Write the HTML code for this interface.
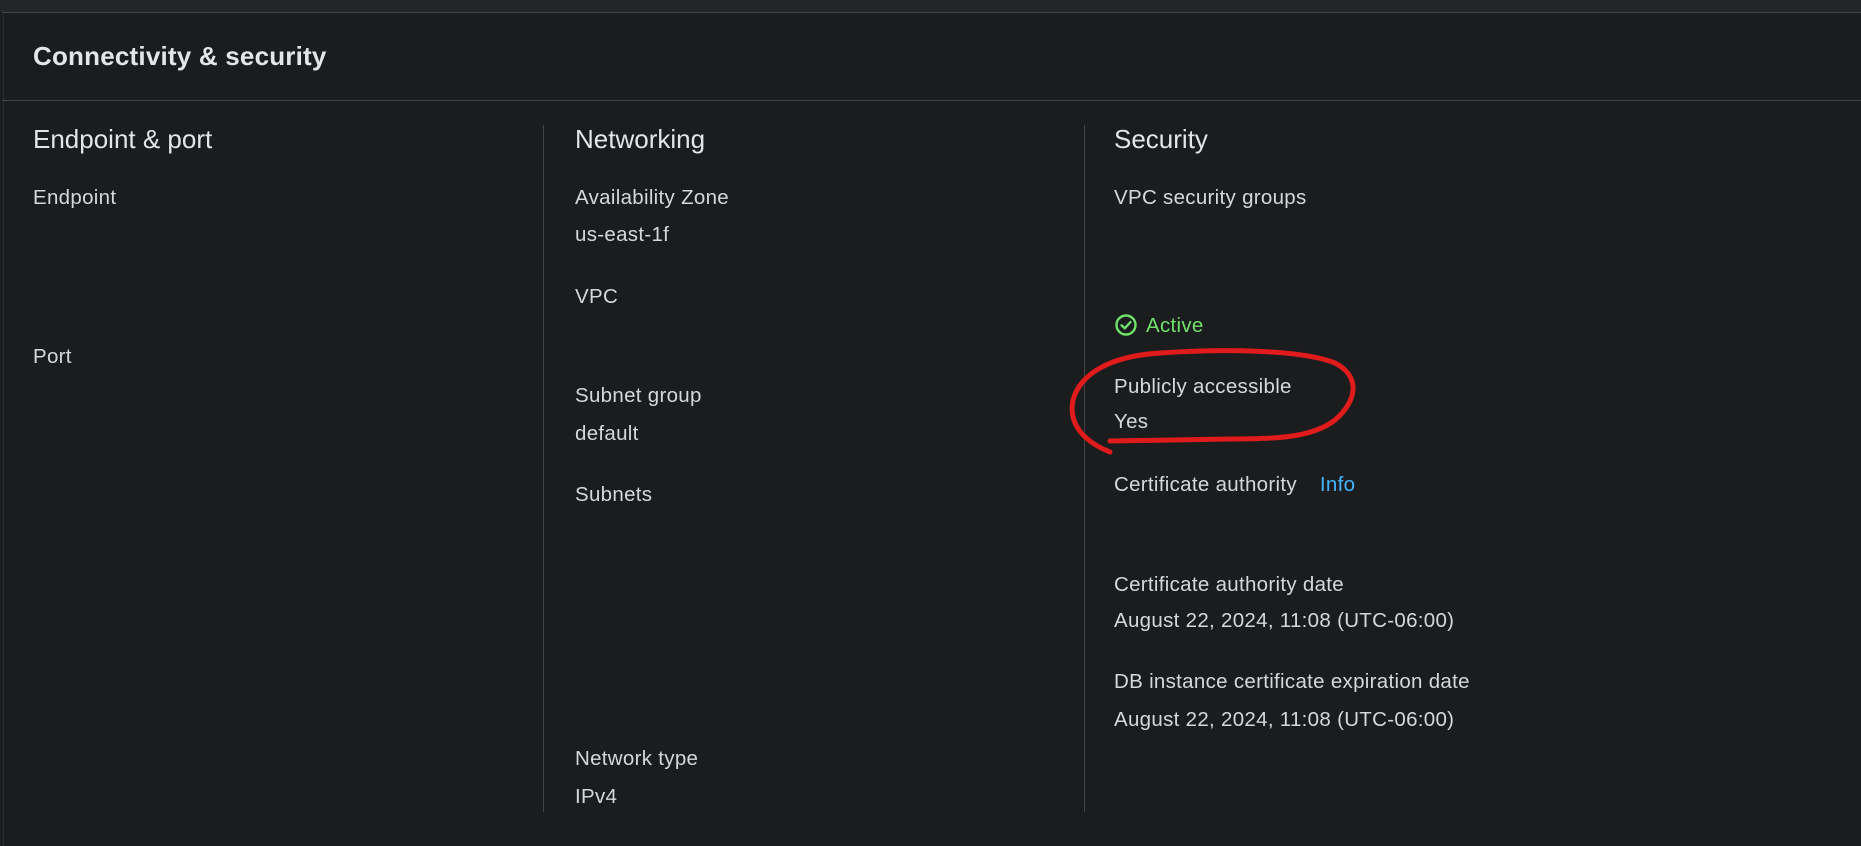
<!DOCTYPE html>
<html><head><meta charset="utf-8"><style>
html,body{margin:0;padding:0;}
body{width:1861px;height:846px;background:#1b1c1e;position:relative;overflow:hidden;font-family:"Liberation Sans",sans-serif;color:#d5d7da;}
.top{position:absolute;left:0;top:0;width:1861px;height:12px;background:#232528;}
.hl{position:absolute;left:2px;right:0;height:1px;background:#414346;}
.vl{position:absolute;width:1px;background:#414346;top:125px;height:687px;}
.lb{position:absolute;left:3px;top:12px;width:1px;height:834px;background:#2a2c2f;}
.t{position:absolute;font-size:20.5px;letter-spacing:0.3px;line-height:24px;white-space:nowrap;}
.h{position:absolute;font-size:26px;line-height:30px;white-space:nowrap;color:#e3e5e8;}
</style></head><body>
<div class="top"></div>
<div class="lb"></div>
<div class="hl" style="top:12px"></div>
<div class="hl" style="top:100px"></div>
<div class="t" style="left:33px;top:41px;font-size:26px;letter-spacing:0.2px;line-height:30px;font-weight:bold;color:#e3e5e8">Connectivity &amp; security</div>
<div class="vl" style="left:543px"></div>
<div class="vl" style="left:1084px"></div>

<div class="h" style="left:33px;top:124px">Endpoint &amp; port</div>
<div class="t" style="left:33px;top:186px">Endpoint</div>
<div class="t" style="left:33px;top:345px">Port</div>

<div class="h" style="left:575px;top:124px">Networking</div>
<div class="t" style="left:575px;top:186px">Availability Zone</div>
<div class="t" style="left:575px;top:223px">us-east-1f</div>
<div class="t" style="left:575px;top:285px">VPC</div>
<div class="t" style="left:575px;top:384px">Subnet group</div>
<div class="t" style="left:575px;top:422px">default</div>
<div class="t" style="left:575px;top:483px">Subnets</div>
<div class="t" style="left:575px;top:747px">Network type</div>
<div class="t" style="left:575px;top:785px">IPv4</div>

<div class="h" style="left:1114px;top:124px">Security</div>
<div class="t" style="left:1114px;top:186px">VPC security groups</div>
<svg style="position:absolute;left:1114px;top:313px" width="24" height="24" viewBox="0 0 24 24"><circle cx="12" cy="12" r="9.5" fill="none" stroke="#6fe06a" stroke-width="2.4"/><path d="M7.5 12.3 L10.8 15.3 L16.5 9" fill="none" stroke="#6fe06a" stroke-width="2.4" stroke-linecap="round" stroke-linejoin="round"/></svg>
<div class="t" style="left:1146px;top:314px;color:#6fe06a">Active</div>
<div class="t" style="left:1114px;top:375px">Publicly accessible</div>
<div class="t" style="left:1114px;top:410px">Yes</div>
<div class="t" style="left:1114px;top:473px">Certificate authority <span style="color:#42b4ff;margin-left:17px">Info</span></div>
<div class="t" style="left:1114px;top:573px">Certificate authority date</div>
<div class="t" style="left:1114px;top:609px">August 22, 2024, 11:08 (UTC-06:00)</div>
<div class="t" style="left:1114px;top:670px">DB instance certificate expiration date</div>
<div class="t" style="left:1114px;top:708px">August 22, 2024, 11:08 (UTC-06:00)</div>

<svg style="position:absolute;left:0;top:0" width="1861" height="846"><path d="M1110,452 C1085,442 1068,425 1073,400 C1080,374 1110,356 1160,353 C1220,349 1300,349 1335,363 C1362,377 1356,402 1335,420 C1312,438 1275,439 1230,439 L1110,441" fill="none" stroke="#e01b1b" stroke-width="5" stroke-linecap="round" stroke-linejoin="round"/></svg>
</body></html>
